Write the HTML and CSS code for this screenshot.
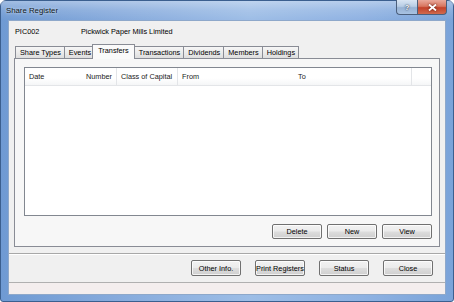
FILE: index.html
```html
<!DOCTYPE html>
<html>
<head>
<meta charset="utf-8">
<link rel="stylesheet" href="styles.css">
</head>
<body>
<div class="window">
  <div class="titlebar">
    <span class="title">Share Register</span>
    <div class="caption-btns">
      <div class="cbtn help">?</div>
      <div class="cbtn close">
        <svg width="9" height="7" viewBox="0 0 9 7"><path d="M1 0.5 L8 6.5 M8 0.5 L1 6.5" stroke="#fff" stroke-width="1.8" fill="none"/></svg>
      </div>
    </div>
  </div>
  <div class="client">
    <div class="company"><span class="code">PIC002</span><span>Pickwick Paper Mills Limited</span></div>
    <div class="tabs">
      <div class="tab">Share Types</div>
      <div class="tab">Events</div>
      <div class="tab active">Transfers</div>
      <div class="tab">Transactions</div>
      <div class="tab">Dividends</div>
      <div class="tab">Members</div>
      <div class="tab">Holdings</div>
    </div>
    <div class="panel">
      <div class="list">
        <div class="list-header">
          <div class="col col-date">Date</div>
          <div class="col col-number">Number</div>
          <div class="col col-class sep">Class of Capital</div>
          <div class="col col-from sep">From</div>
          <div class="col col-to">To</div>
          <div class="col col-rest sep"></div>
        </div>
      </div>
      <div class="panel-buttons">
        <div class="btn">Delete</div>
        <div class="btn">New</div>
        <div class="btn">View</div>
      </div>
    </div>
    <div class="separator"></div>
    <div class="footer-buttons">
      <div class="btn tall">Other Info.</div>
      <div class="btn tall">Print Registers</div>
      <div class="btn tall">Status</div>
      <div class="btn tall">Close</div>
    </div>
    <div class="statusbar"></div>
  </div>
</div>
</body>
</html>
```

FILE: styles.css
```css
html, body {
  margin: 0;
  padding: 0;
  background: #ffffff;
}
body {
  width: 454px;
  height: 302px;
  overflow: hidden;
  font-family: "Liberation Sans", Arial, sans-serif;
  font-size: 7.3px;
  color: #000;
}
.window {
  box-sizing: border-box;
  width: 454px;
  height: 302px;
  padding: 0 7px 6px 7px;
  border: 1px solid #3b5f8f;
  border-radius: 6px 6px 3px 3px;
  background: linear-gradient(90deg, #6f9ad3 0%, #86aadc 25%, #9dbde6 55%, #8fb2e2 80%, #7aa3d9 100%);
  display: flex;
  flex-direction: column;
}
.titlebar {
  height: 19px;
  margin: 0 -7px;
  padding: 0 6px 0 5px;
  display: flex;
  justify-content: space-between;
  align-items: flex-start;
  background: linear-gradient(180deg, rgba(255,255,255,0.35) 0%, rgba(255,255,255,0.12) 50%, rgba(255,255,255,0) 100%);
}
.title {
  font-size: 7.8px;
  line-height: 19px;
  color: #101820;
  text-shadow: 0 0 3px rgba(255,255,255,0.9);
}
.caption-btns {
  display: flex;
  margin-top: -1px;
}
.cbtn {
  box-sizing: border-box;
  height: 15px;
  display: flex;
  align-items: center;
  justify-content: center;
  border: 1px solid #4b5f7c;
  border-top: none;
}
.help {
  width: 21px;
  border-radius: 0 0 0 4px;
  border-right: none;
  background: linear-gradient(180deg, #d9e5f3 0%, #b8cde5 45%, #97b2d4 55%, #a8c2e2 100%);
  color: #fff;
  font-weight: bold;
  font-size: 7.5px;
  text-shadow: 0 0 2px #2b3d55, 0 0 1px #2b3d55;
}
.close {
  width: 30px;
  border-radius: 0 0 4px 0;
  background: linear-gradient(180deg, #e9a99b 0%, #d8765f 45%, #c3422a 55%, #d06a4f 100%);
}
.close svg {
  filter: drop-shadow(0 0 1px #5a1a10);
}
.client {
  flex: 1;
  background: #f0f0f0;
  border: 1px solid #8ea8ca;
  display: flex;
  flex-direction: column;
}
.company {
  height: 19px;
  padding-left: 6px;
  display: flex;
  align-items: center;
  margin-top: 1px;
}
.code {
  width: 66px;
}
.tabs {
  margin-top: 3px;
  margin-left: 6px;
  height: 14px;
  display: flex;
  align-items: flex-end;
  position: relative;
  z-index: 2;
}
.tab {
  box-sizing: border-box;
  height: 12px;
  padding: 0 3px 0 4px;
  border: 1px solid #898c95;
  border-bottom: none;
  margin-right: -1px;
  background: linear-gradient(180deg, #f6f6f6 0%, #ebebeb 50%, #dedede 100%);
  line-height: 11px;
  white-space: nowrap;
}
.tab.active {
  height: 15px;
  margin: 0 -1px -1px -2px;
  padding: 0 5px;
  background: #fafafa;
  line-height: 12px;
  position: relative;
  z-index: 3;
}
.panel {
  box-sizing: border-box;
  margin: 0 5px 0 5px;
  height: 189px;
  border: 1px solid #898c95;
  background: #f7f7f7;
  padding: 8px 7px 7px 9px;
  display: flex;
  flex-direction: column;
  position: relative;
  z-index: 1;
}
.list {
  box-sizing: border-box;
  height: 149px;
  border: 1px solid #828790;
  background: #fff;
}
.list-header {
  height: 17px;
  display: flex;
  border-bottom: 1px solid #e3e5e8;
  background: linear-gradient(180deg, #ffffff 0%, #ffffff 60%, #f5f6f7 100%);
}
.col {
  box-sizing: border-box;
  height: 17px;
  line-height: 17px;
  padding: 0 4px;
  color: #1a1a1a;
  white-space: nowrap;
}
.sep {
  border-left: 1px solid #e3e5e8;
}
.col-date { width: 48px; }
.col-number { width: 43px; text-align: right; }
.col-class { width: 61px; }
.col-from { width: 117px; }
.col-to { width: 117px; }
.col-rest { flex: 1; }
.panel-buttons {
  margin-top: 8px;
  display: flex;
  justify-content: flex-end;
  gap: 5px;
}
.btn {
  box-sizing: border-box;
  width: 50px;
  height: 15px;
  border: 1px solid #707070;
  border-radius: 2px;
  background: linear-gradient(180deg, #f2f2f2 0%, #ebebeb 48%, #dddddd 52%, #cfcfcf 100%);
  box-shadow: inset 0 0 0 1px rgba(255,255,255,0.75);
  display: flex;
  align-items: center;
  justify-content: center;
  white-space: nowrap;
}
.btn.tall {
  height: 16px;
}
.separator {
  margin-top: 6px;
  height: 1px;
  background: #a8a8a8;
  border-bottom: 1px solid #ffffff;
}
.footer-buttons {
  margin-top: 5px;
  display: flex;
  justify-content: flex-end;
  gap: 14px;
  padding-right: 12px;
}
.statusbar {
  margin-top: 6px;
  flex: 1;
  border-top: 1px solid #b0b0b0;
  background: #f4eeee;
}
```
